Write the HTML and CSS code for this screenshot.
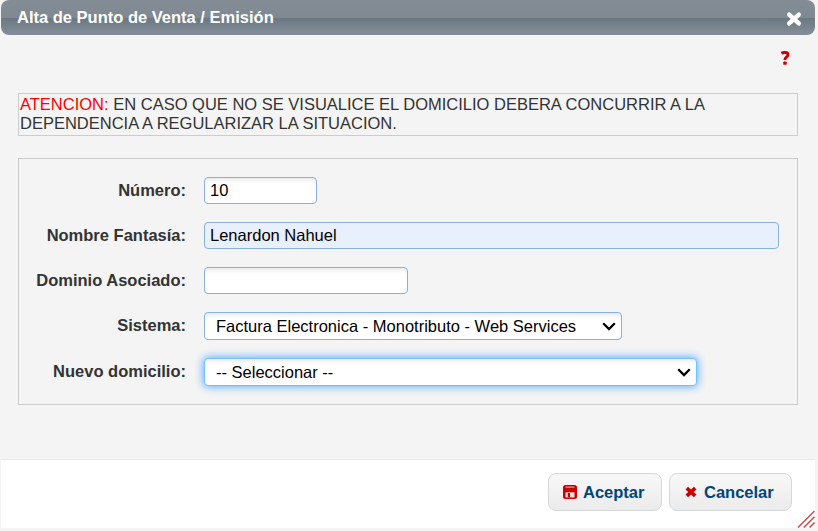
FILE: index.html
```html
<!DOCTYPE html>
<html lang="es">
<head>
    <meta charset="UTF-8">
    <meta name="viewport" content="width=device-width, initial-scale=1.0">
    <title>Alta de Punto de Venta / Emisión</title>
    <link rel="stylesheet" href="styles.css">
</head>
<body>
    <div class="dialog">
        <div class="titlebar">
            <span class="title">Alta de Punto de Venta / Emisión</span>
            <svg class="close" width="16" height="16" viewBox="0 0 16 16">
                <path d="M3.2 3.6 L12.8 12.4 M12.8 3.6 L3.2 12.4" stroke="#fff" stroke-width="4.4" stroke-linecap="round"/>
            </svg>
        </div>
        <div class="content">
            <div class="help">
                <svg width="9" height="14" viewBox="0 0 9 14">
                    <path d="M0.4 2.2 C2.4 1.2 7 0.8 7 3.7 C7 6.2 3.9 5.8 3.9 9" fill="none" stroke="#cc0000" stroke-width="2.9"/>
                    <rect x="2.3" y="10.4" width="3.4" height="3.4" rx="0.9" fill="#cc0000"/>
                </svg>
            </div>
            <div class="notice"><span class="warning">ATENCION:</span> EN CASO QUE NO SE VISUALICE EL DOMICILIO DEBERA CONCURRIR A LA DEPENDENCIA A REGULARIZAR LA SITUACION.</div>
            <form class="panel">
                <div class="row">
                    <label for="numero">Número:</label>
                    <input class="field numero" id="numero" type="text" value="10">
                </div>
                <div class="row">
                    <label for="nombre">Nombre Fantasía:</label>
                    <input class="field nombre" id="nombre" type="text" value="Lenardon Nahuel">
                </div>
                <div class="row">
                    <label for="dominio">Dominio Asociado:</label>
                    <input class="field dominio" id="dominio" type="text">
                </div>
                <div class="row">
                    <label for="sistema">Sistema:</label>
                    <div class="select sistema">
                        <select class="field" id="sistema">
                            <option>Factura Electronica - Monotributo - Web Services</option>
                        </select>
                        <svg class="arrow" width="14" height="9" viewBox="0 0 14 9">
                            <path d="M1.2 1.2 L7 7 L12.8 1.2" fill="none" stroke="#000" stroke-width="2.3"/>
                        </svg>
                    </div>
                </div>
                <div class="row">
                    <label for="domicilio">Nuevo domicilio:</label>
                    <div class="select domicilio">
                        <select class="field active" id="domicilio">
                            <option>-- Seleccionar --</option>
                        </select>
                        <svg class="arrow" width="14" height="9" viewBox="0 0 14 9">
                            <path d="M1.2 1.2 L7 7 L12.8 1.2" fill="none" stroke="#000" stroke-width="2.3"/>
                        </svg>
                    </div>
                </div>
            </form>
        </div>
        <div class="buttonpane">
            <button class="aceptar" type="button">
                <svg width="14" height="14" viewBox="0 0 14 14">
                    <rect x="0" y="0" width="14" height="14" rx="2.5" fill="#cc0000"/>
                    <rect x="2.5" y="1.4" width="9" height="1.4" fill="#e08a8a"/>
                    <rect x="2.5" y="7.3" width="9" height="5.2" fill="#f0dcdc"/>
                    <rect x="4.8" y="8" width="2.2" height="4.5" fill="#cc0000"/>
                </svg>
                <span>Aceptar</span>
            </button>
            <button class="cancelar" type="button">
                <svg width="12" height="12" viewBox="0 0 12 12">
                    <path d="M1.8 2.1 L10.2 9.9 M10.2 2.1 L1.8 9.9" stroke="#cc0000" stroke-width="3.7"/>
                </svg>
                <span>Cancelar</span>
            </button>
            <svg class="grip" width="18" height="18" viewBox="0 0 18 18">
                <path d="M1 17.5 L17.5 1 M6.8 17.5 L17.5 6.8 M12.6 17.5 L17.5 12.6" stroke="#d6494d" stroke-width="1.5"/>
            </svg>
        </div>
    </div>
</body>
</html>
```

FILE: styles.css
```css
* {
    box-sizing: border-box;
}
body {
    margin: 0;
    background: #f4f4f4;
    font-family: "Liberation Sans", Arial, sans-serif;
    font-size: 16.5px;
    color: #333;
    overflow: hidden;
}
.dialog {
    position: relative;
    width: 814px;
    height: 528px;
    margin-left: 1px;
    display: flex;
    flex-direction: column;
}
.titlebar {
    display: flex;
    justify-content: space-between;
    align-items: center;
    height: 35px;
    padding: 0 13px 0 16px;
    border-radius: 8px;
    background: linear-gradient(#848d96 0%, #7f8991 50%, #6a7883 51%, #858e98 100%);
    color: #fff;
    font-weight: bold;
}
.close {
    margin-top: 3px;
}
.content {
    flex: 1;
    padding: 16px 17px 0;
}
.help {
    display: flex;
    justify-content: flex-end;
    height: 42px;
    padding-right: 8px;
}
.notice {
    height: 43px;
    padding: 1px;
    border: 1px solid #ccc;
    line-height: 19px;
}
.warning {
    color: #f00;
}
.panel {
    display: flex;
    flex-direction: column;
    gap: 18px;
    margin-top: 22px;
    padding: 18px 0;
    border: 1px solid #ccc;
}
.row {
    display: flex;
    align-items: center;
    gap: 18px;
}
label {
    width: 167px;
    padding-bottom: 1px;
    line-height: 19px;
    text-align: right;
    font-weight: bold;
}
.field {
    height: 27px;
    padding: 0 5px;
    border: 1px solid #8ab0dc;
    border-radius: 4px;
    background: #fff;
    box-shadow: inset 0 4px 4px -2px rgba(0, 0, 0, 0.1);
    font: inherit;
    color: #000;
    outline: none;
}
.numero {
    width: 113px;
}
.nombre {
    width: 575px;
    background: #e8f0fe;
    box-shadow: none;
}
.dominio {
    width: 204px;
}
.select {
    position: relative;
    height: 28px;
}
.select .field {
    width: 100%;
    height: 28px;
    padding: 0 11px;
    appearance: none;
}
.sistema {
    width: 418px;
}
.domicilio {
    width: 493px;
}
.select .active {
    border-color: #6fc5ef;
    box-shadow: 0 0 9px 1px #64acff, inset 0 4px 4px -2px rgba(0, 0, 0, 0.1);
}
.arrow {
    position: absolute;
    top: 10px;
    right: 6px;
}
.buttonpane {
    position: relative;
    display: flex;
    justify-content: flex-end;
    gap: 7px;
    height: 69px;
    padding: 13px 23px 0 0;
    border-top: 1px solid #eaeaea;
    background: #fff;
}
button {
    display: flex;
    align-items: center;
    height: 38px;
    padding: 0 14px;
    border: 1px solid #d5d8da;
    border-radius: 8px;
    background: linear-gradient(#f8f8f8, #ebebeb);
    font: bold 16.5px "Liberation Sans", Arial, sans-serif;
    color: #00457c;
    white-space: nowrap;
}
.aceptar {
    width: 114px;
    gap: 6px;
}
.cancelar {
    width: 123px;
    gap: 7px;
    padding-left: 15px;
}
.grip {
    position: absolute;
    right: 0;
    bottom: 0;
}
```
